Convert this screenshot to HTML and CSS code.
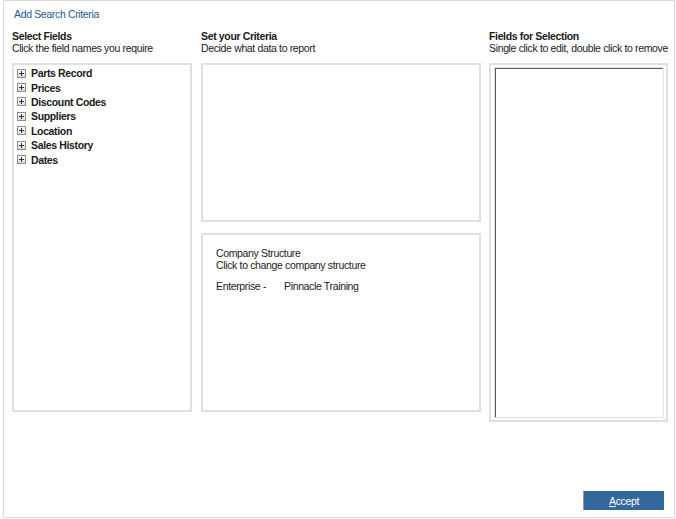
FILE: index.html
```html
<!DOCTYPE html>
<html lang="en">
<head>
  <meta charset="UTF-8" />
  <title>Add Search Criteria</title>
  <link rel="stylesheet" href="styles.css">
</head>
<body>

  <div class="marco">
    <div class="titulo">Add Search Criteria</div>

    <div class="columnas">
      <div class="columna">
        <div class="cabecera">Select Fields</div>
        <div class="subtitulo">Click the field names you require</div>
        <div class="panel panel-campos">
          <ul class="arbol">
            <li><span class="expandir"></span>Parts Record</li>
            <li><span class="expandir"></span>Prices</li>
            <li><span class="expandir"></span>Discount Codes</li>
            <li><span class="expandir"></span>Suppliers</li>
            <li><span class="expandir"></span>Location</li>
            <li><span class="expandir"></span>Sales History</li>
            <li><span class="expandir"></span>Dates</li>
          </ul>
        </div>
      </div>

      <div class="columna">
        <div class="cabecera">Set your Criteria</div>
        <div class="subtitulo">Decide what data to report</div>
        <div class="panel panel-criterios"></div>
        <div class="panel panel-empresa">
          <div>Company Structure</div>
          <div>Click to change company structure</div>
          <div class="empresa-fila">
            <span class="empresa-etiqueta">Enterprise -</span>
            <span>Pinnacle Training</span>
          </div>
        </div>
      </div>

      <div class="columna columna-derecha">
        <div class="cabecera">Fields for Selection</div>
        <div class="subtitulo">Single click to edit, double click to remove</div>
        <div class="panel panel-seleccion">
          <div class="caja-seleccion"></div>
        </div>
      </div>
    </div>

    <div class="pie">
      <button class="boton-aceptar"><u>A</u>ccept</button>
    </div>
  </div>

</body>
</html>
```

FILE: styles.css
```css
* {
  box-sizing: border-box;
}

body {
  margin: 0;
  background: #ffffff;
  font-family: 'Liberation Sans', Arial, sans-serif;
  font-size: 10.5px;
  letter-spacing: -0.35px;
  line-height: 12px;
  color: #1a1a1a;
}

.marco {
  margin-left: 3px;
  width: 672px;
  height: 518px;
  border: 1px solid #d9d9d9;
  display: flex;
  flex-direction: column;
  padding: 7px 0 7px 8px;
}

.titulo {
  color: #1f5a97;
  padding-left: 2px;
  margin-bottom: 10px;
}

.columnas {
  display: grid;
  grid-template-columns: 180px 280px 178px;
  column-gap: 9px;
  align-items: start;
}

/* la columna derecha va un pixel más cerca */
.columna-derecha {
  margin-left: -1px;
  white-space: nowrap;
}

.cabecera {
  font-weight: bold;
}

.subtitulo {
  margin-bottom: 9px;
}

.panel {
  border: 2px solid #dbe0eb;
  background: #fff;
}

.panel-campos {
  height: 349px;
  padding: 1px 3px;
}

.arbol {
  list-style: none;
  margin: 0;
  padding: 0;
}

.arbol li {
  display: flex;
  align-items: center;
  gap: 5px;
  height: 14.4px;
  font-weight: bold;
}

.expandir {
  width: 9px;
  height: 9px;
  border: 1px solid #8f8f8f;
  background: linear-gradient(#fafafa, #dcdcdc);
  position: relative;
  flex-shrink: 0;
}

.expandir::before,
.expandir::after {
  content: "";
  position: absolute;
  background: #333;
}

.expandir::before {
  left: 1px;
  top: 3px;
  width: 5px;
  height: 1px;
}

.expandir::after {
  left: 3px;
  top: 1px;
  width: 1px;
  height: 5px;
}

.panel-criterios {
  height: 159px;
  margin-bottom: 11px;
}

.panel-empresa {
  height: 179px;
  padding: 12px 13px;
}

.empresa-fila {
  display: flex;
  margin-top: 9px;
}

.empresa-etiqueta {
  width: 68px;
}

.panel-seleccion {
  height: 359px;
  padding: 2px 2px 2px 3px;
}

.caja-seleccion {
  height: 100%;
  border: 1px solid #e2e2e2;
  box-shadow: inset 1px 1px 0 #5c5c5c;
}

.pie {
  margin-top: auto;
  display: flex;
  justify-content: flex-end;
  padding-right: 10px;
}

.boton-aceptar {
  width: 81px;
  height: 19px;
  border: none;
  border-left: 1px solid #7e9ec2;
  background: #34679b;
  color: #ffffff;
  font-family: 'Liberation Sans', Arial, sans-serif;
  font-size: 10.5px;
  letter-spacing: -0.35px;
  padding: 0;
  cursor: pointer;
}
```
